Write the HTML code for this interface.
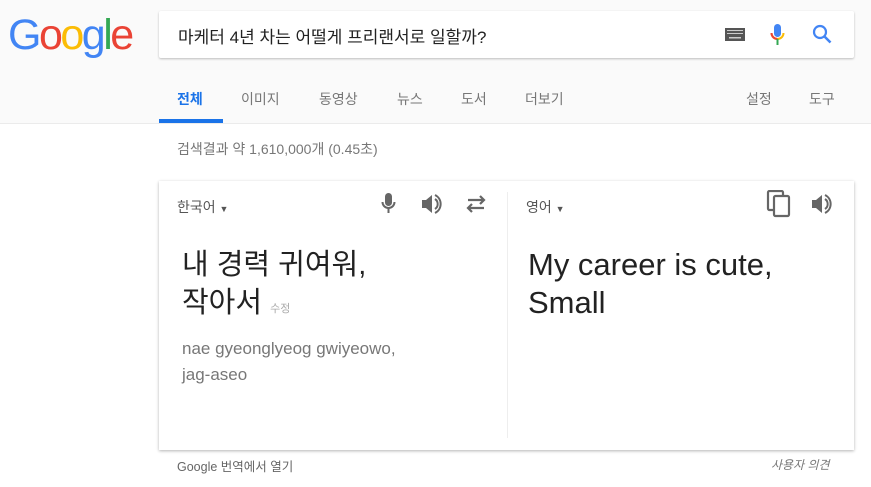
<!DOCTYPE html>
<html><head><meta charset="utf-8"><style>
*{margin:0;padding:0;box-sizing:border-box}
body{width:871px;height:487px;background:#fff;font-family:"Liberation Sans","Noto Sans CJK KR",sans-serif;position:relative;overflow:hidden}
.hdr{position:absolute;left:0;top:0;width:871px;height:124px;background:#fafafa;border-bottom:1px solid #ebebeb}
.logo{position:absolute;left:8px;top:11px;font-size:43px;letter-spacing:-2.5px;font-family:"Liberation Sans",sans-serif}
.sb{position:absolute;left:159px;top:11px;width:695px;height:47px;background:#fff;box-shadow:0 1px 2px rgba(0,0,0,.25);border-radius:2px}
.sb .q{position:absolute;left:19px;top:12px;font-size:17px;color:#222}
.tab{position:absolute;top:89px;font-size:14px;color:#777}
.ul{position:absolute;left:159px;top:119px;width:64px;height:4px;background:#1a73e8}
.abs{position:absolute}
.card{position:absolute;left:159px;top:181px;width:695px;height:269px;background:#fff;box-shadow:0 1px 3px rgba(0,0,0,.3)}
</style></head><body>
<div class="hdr"></div>
<div class="logo"><span style="color:#4285f4">G</span><span style="color:#ea4335">o</span><span style="color:#fbbc05">o</span><span style="color:#4285f4">g</span><span style="color:#34a853">l</span><span style="color:#ea4335">e</span></div>
<div class="sb"><div class="q">마케터 4년 차는 어떨게 프리랜서로 일할까?</div>
<svg class="abs" style="left:566px;top:17px" width="20" height="13"><rect width="20" height="13" fill="#555"/><g fill="#ccc"><rect x="2" y="2" width="16" height="1"/><rect x="2" y="5" width="16" height="1"/><rect x="4" y="9" width="12" height="1.5"/></g></svg>
<svg class="abs" style="left:611px;top:12px" width="16" height="25"><rect x="4" y="1" width="7" height="13" rx="3.5" fill="#4285f4"/><path d="M1.5 10a6 6 0 0 0 12 0" stroke="#fbbc05" stroke-width="2" fill="none"/><path d="M1.5 10a6 6 0 0 0 6 6" stroke="#ea4335" stroke-width="2" fill="none"/><rect x="6.5" y="16" width="2" height="6" fill="#34a853"/></svg>
<svg class="abs" style="left:653px;top:13px" width="22" height="22"><circle cx="8" cy="8" r="6" stroke="#4285f4" stroke-width="2.2" fill="none"/><path d="M12.5 12.5l6 6" stroke="#4285f4" stroke-width="2.6"/></svg>
</div>
<div class="tab" style="left:177px;color:#1a73e8;font-weight:bold">전체</div>
<div class="tab" style="left:241px">이미지</div>
<div class="tab" style="left:319px">동영상</div>
<div class="tab" style="left:397px">뉴스</div>
<div class="tab" style="left:461px">도서</div>
<div class="tab" style="left:525px">더보기</div>
<div class="tab" style="left:746px">설정</div>
<div class="tab" style="left:809px">도구</div>
<div class="ul"></div>
<div class="abs" style="left:177px;top:139px;font-size:14px;color:#777">검색결과 약 1,610,000개 (0.45초)</div>
<div class="card">
<div class="abs" style="left:18px;top:16px;font-size:14px;color:#555">한국어 <span style="font-size:9px">▼</span></div>
<svg class="abs" style="left:222px;top:11px" width="16" height="24"><rect x="4" y="1" width="7" height="13" rx="3.5" fill="#666"/><path d="M1.5 10a6 6 0 0 0 12 0" stroke="#666" stroke-width="2" fill="none"/><rect x="6.5" y="16" width="2" height="5" fill="#666"/></svg>
<svg class="abs" style="left:261px;top:11px" width="24" height="24"><path d="M2 8h4l6-5v18l-6-5H2z" fill="#666"/><path d="M15 7a6 6 0 0 1 0 10M15 3a10 10 0 0 1 0 18" stroke="#666" stroke-width="2" fill="none"/></svg>
<svg class="abs" style="left:305px;top:12px" width="24" height="22"><path d="M4 7h16M16 3l4 4-4 4M20 15H4M8 11l-4 4 4 4" stroke="#666" stroke-width="2.2" fill="none"/></svg>
<div class="abs" style="left:348px;top:11px;width:1px;height:246px;background:#eee"></div>
<div class="abs" style="left:367px;top:16px;font-size:14px;color:#555">영어 <span style="font-size:9px">▼</span></div>
<svg class="abs" style="left:607px;top:9px" width="26" height="28"><rect x="2" y="1" width="15" height="19" rx="1.5" stroke="#666" stroke-width="2.2" fill="none"/><rect x="8" y="6" width="15" height="20" rx="1.5" fill="#fff" stroke="#666" stroke-width="2.2"/></svg>
<svg class="abs" style="left:651px;top:11px" width="24" height="24"><path d="M2 8h4l6-5v18l-6-5H2z" fill="#666"/><path d="M15 7a6 6 0 0 1 0 10M15 3a10 10 0 0 1 0 18" stroke="#666" stroke-width="2" fill="none"/></svg>
<div class="abs" style="left:23px;top:65px;font-size:29px;line-height:38px;color:#222">내 경력 귀여워,<br>작아서 <span style="font-size:11px;color:#aaa">수정</span></div>
<div class="abs" style="left:23px;top:155px;font-size:17px;line-height:26px;color:#777">nae gyeonglyeog gwiyeowo,<br>jag-aseo</div>
<div class="abs" style="left:369px;top:65px;font-size:31px;line-height:38px;color:#222">My career is cute,<br>Small</div>
</div>
<div class="abs" style="left:177px;top:456px;font-size:12.5px;color:#666">Google 번역에서 열기</div>
<div class="abs" style="left:771px;top:456px;font-size:12px;color:#777;font-style:italic">사용자 의견</div>
</body></html>
